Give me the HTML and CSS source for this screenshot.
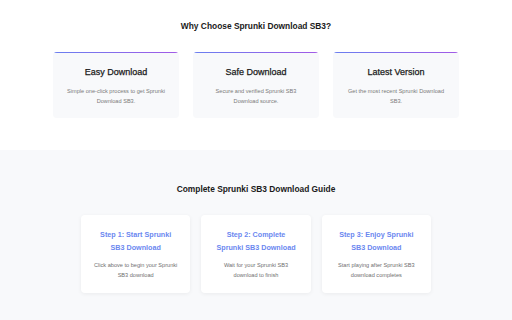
FILE: index.html
```html
<!DOCTYPE html>
<html lang="en">
<head>
  <meta charset="UTF-8">
  <meta name="viewport" content="width=device-width, initial-scale=1.0">
  <title>Sprunki Download SB3</title>
<link rel="stylesheet" href="styles.css">
</head>
<body>
  <section class="features">
    <h2 class="section-title">Why Choose Sprunki Download SB3?</h2>
    <div class="feature-grid">
      <div class="feature-card">
        <h3>Easy Download</h3>
        <p>Simple one-click process to get Sprunki Download SB3.</p>
      </div>
      <div class="feature-card">
        <h3>Safe Download</h3>
        <p>Secure and verified Sprunki SB3 Download source.</p>
      </div>
      <div class="feature-card">
        <h3>Latest Version</h3>
        <p>Get the most recent Sprunki Download SB3.</p>
      </div>
    </div>
  </section>

  <section class="guide">
    <h2 class="section-title">Complete Sprunki SB3 Download Guide</h2>
    <div class="step-grid">
      <div class="step-card">
        <h3>Step 1: Start Sprunki SB3 Download</h3>
        <p>Click above to begin your Sprunki SB3 download</p>
      </div>
      <div class="step-card">
        <h3>Step 2: Complete Sprunki SB3 Download</h3>
        <p>Wait for your Sprunki SB3 download to finish</p>
      </div>
      <div class="step-card">
        <h3>Step 3: Enjoy Sprunki SB3 Download</h3>
        <p>Start playing after Sprunki SB3 download completes</p>
      </div>
    </div>
  </section>
</body>
</html>
```

FILE: styles.css
```css
body { margin: 0; font-family: "Liberation Sans", Arial, sans-serif; background: #fff; color: #222; }
.section-title { margin: 0; font-size: 8.4px; line-height: 10px; font-weight: bold; text-align: center; color: #1a1a1a; }

.features { padding: 21px 0 32px; background: #fff; }
.feature-grid { width: 406px; margin: 21px auto 0; display: grid; grid-template-columns: repeat(3, 1fr); gap: 14px; }
.feature-card { border-top: 1px solid transparent; border-radius: 4px; padding: 13px 8px 12px; text-align: center; height: 66px; box-sizing: border-box; background-color: #f8f9fb; background-image: linear-gradient(90deg, #6a7ff0, #a25ae6); background-size: 100% 1px; background-repeat: no-repeat; background-origin: border-box; background-position: top; }
.feature-card h3 { margin: 0; font-size: 9px; line-height: 12px; font-weight: normal; color: #1a1a1a; -webkit-text-stroke: 0.25px #1a1a1a; }
.feature-card p { margin: 8px 0 0; font-size: 5.6px; line-height: 10px; color: #7a7a7a; padding: 0 2px; }

.guide { background: #f8f9fb; padding: 34px 0 27px; }
.step-grid { width: 350px; margin: 21px auto 0; display: grid; grid-template-columns: repeat(3, 1fr); gap: 11px; }
.step-card { background: #fff; border-radius: 4px; box-shadow: 0 1px 4px rgba(0,0,0,0.06); padding: 13px 12px 13px; text-align: center; height: 78px; box-sizing: border-box; }
.step-card h3 { margin: 0; font-size: 7.2px; line-height: 13px; font-weight: bold; color: #6b87f0; }
.step-card p { margin: 6px 0 0; font-size: 5.6px; line-height: 10px; color: #6f6f6f; }
```
